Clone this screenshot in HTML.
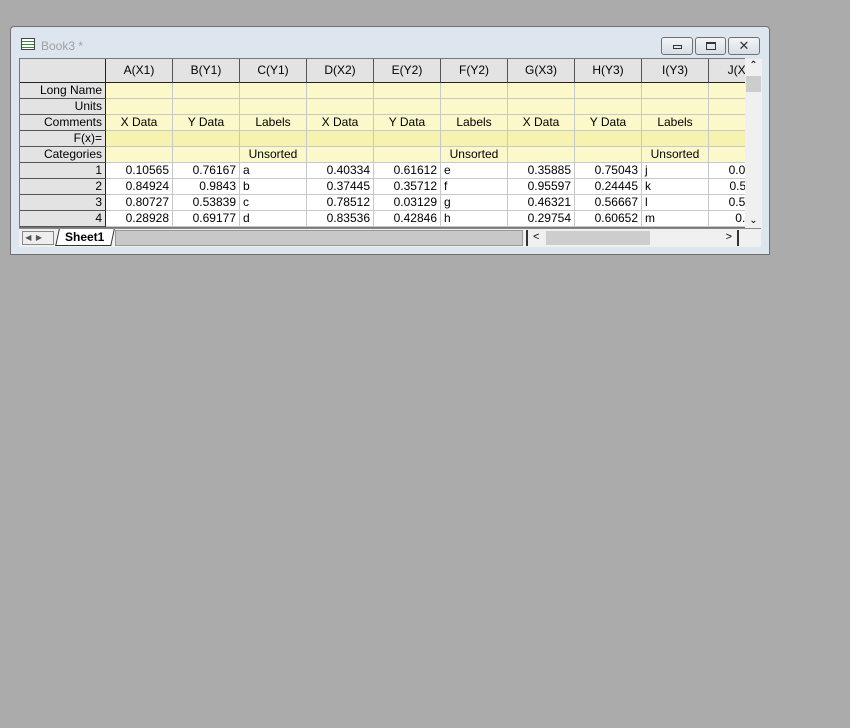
<!DOCTYPE html>
<html><head><style>
*{margin:0;padding:0;box-sizing:border-box}
body{width:850px;height:728px;background:#ababab;position:relative;overflow:hidden;font-family:"Liberation Sans",Arial,sans-serif;font-size:12px;color:#000}
.win{position:absolute;left:10px;top:26px;width:760px;height:229px;background:#dde5ee;border:1px solid #707070;border-radius:4px 4px 0 0}
.title{position:absolute;left:30px;top:12px;color:#a0a0a0;font-size:12px}
.icon{position:absolute;left:10px;top:11px;width:14px;height:12px;border:1px solid #444;background:repeating-linear-gradient(#fff 0 2px,#3a8a3a 2px 3px)}
.btn{position:absolute;top:10px;height:18px;border:1px solid #707070;border-radius:3px;background:linear-gradient(#f2f4f7,#d8dee6)}
.grid{position:absolute;left:8px;top:31px;width:726px;height:170px;overflow:hidden;background:#fff;border:1px solid #777;border-right:none}
table{border-collapse:separate;border-spacing:0;table-layout:fixed;width:756px}
td{height:16px;border-right:1px solid #c8c8c8;border-bottom:1px solid #c8c8c8;white-space:nowrap;overflow:hidden;padding:0 3px;line-height:15px}
td.h{background:#e3e3e3;text-align:right;border-right:1px solid #222;border-bottom:1px solid #555}
tr.top td{height:24px;background:#e3e3e3;text-align:center;border-bottom:1px solid #222;border-right:1px solid #555}
tr.top td:first-child{border-right:1px solid #222}
td.y{background:#fbf9c9;text-align:center}
td.y2{background:#f6f3b0}
td.n{text-align:right}
.vs{position:absolute;left:734px;top:32px;width:17px;height:169px;background:#f0f0f0}
.bot{position:absolute;left:8px;top:201px;width:742px;height:19px;background:#f0f0f0;border-top:1px solid #888}
</style></head><body>
<div class="win">
<div class="icon"></div><div class="title">Book3 *</div>
<div class="btn" style="left:650px;width:32px"><div style="position:absolute;left:11px;top:7px;width:9px;height:4px;border:1px solid #333"></div></div>
<div class="btn" style="left:684px;width:31px"><div style="position:absolute;left:10px;top:4px;width:10px;height:8px;border:1px solid #333;border-top-width:2px"></div></div>
<div class="btn" style="left:717px;width:32px;text-align:center;line-height:15px;color:#333;font-size:13px">✕</div>
<div class="grid">
<table>
<colgroup><col style="width:86px"><col style="width:67px"><col style="width:67px"><col style="width:67px"><col style="width:67px"><col style="width:67px"><col style="width:67px"><col style="width:67px"><col style="width:67px"><col style="width:67px"><col style="width:67px"></colgroup>
<tr class="top"><td></td><td>A(X1)</td><td>B(Y1)</td><td>C(Y1)</td><td>D(X2)</td><td>E(Y2)</td><td>F(Y2)</td><td>G(X3)</td><td>H(Y3)</td><td>I(Y3)</td><td>J(X4)</td></tr>
<tr><td class="h">Long Name</td><td class="y"></td><td class="y"></td><td class="y"></td><td class="y"></td><td class="y"></td><td class="y"></td><td class="y"></td><td class="y"></td><td class="y"></td><td class="y"></td></tr>
<tr><td class="h">Units</td><td class="y"></td><td class="y"></td><td class="y"></td><td class="y"></td><td class="y"></td><td class="y"></td><td class="y"></td><td class="y"></td><td class="y"></td><td class="y"></td></tr>
<tr><td class="h">Comments</td><td class="y">X Data</td><td class="y">Y Data</td><td class="y">Labels</td><td class="y">X Data</td><td class="y">Y Data</td><td class="y">Labels</td><td class="y">X Data</td><td class="y">Y Data</td><td class="y">Labels</td><td class="y"></td></tr>
<tr><td class="h">F(x)=</td><td class="y y2"></td><td class="y y2"></td><td class="y y2"></td><td class="y y2"></td><td class="y y2"></td><td class="y y2"></td><td class="y y2"></td><td class="y y2"></td><td class="y y2"></td><td class="y y2"></td></tr>
<tr><td class="h">Categories</td><td class="y"></td><td class="y"></td><td class="y">Unsorted</td><td class="y"></td><td class="y"></td><td class="y">Unsorted</td><td class="y"></td><td class="y"></td><td class="y">Unsorted</td><td class="y"></td></tr>
<tr><td class="h">1</td><td class="n">0.10565</td><td class="n">0.76167</td><td>a</td><td class="n">0.40334</td><td class="n">0.61612</td><td>e</td><td class="n">0.35885</td><td class="n">0.75043</td><td>j</td><td class="n">0.09912</td></tr>
<tr><td class="h">2</td><td class="n">0.84924</td><td class="n">0.9843</td><td>b</td><td class="n">0.37445</td><td class="n">0.35712</td><td>f</td><td class="n">0.95597</td><td class="n">0.24445</td><td>k</td><td class="n">0.52311</td></tr>
<tr><td class="h">3</td><td class="n">0.80727</td><td class="n">0.53839</td><td>c</td><td class="n">0.78512</td><td class="n">0.03129</td><td>g</td><td class="n">0.46321</td><td class="n">0.56667</td><td>l</td><td class="n">0.51234</td></tr>
<tr><td class="h">4</td><td class="n">0.28928</td><td class="n">0.69177</td><td>d</td><td class="n">0.83536</td><td class="n">0.42846</td><td>h</td><td class="n">0.29754</td><td class="n">0.60652</td><td>m</td><td class="n">0.7123</td></tr>
</table>
</div>
<div class="vs"><div style="text-align:center;font-size:10px;line-height:14px">&#8963;</div><div style="position:absolute;left:1px;top:17px;width:15px;height:16px;background:#cdcdcd"></div><div style="position:absolute;bottom:2px;width:17px;text-align:center;font-size:10px">&#8964;</div></div>
<div class="bot">
<div style="position:absolute;left:3px;top:2px;width:32px;height:14px;border:1px solid #888;background:#eee;font-size:8px;line-height:12px;color:#555">&nbsp;◀&nbsp;&nbsp;▶</div>
<div style="position:absolute;left:38px;top:0;width:56px;height:17px;background:#fff;border-left:1px solid #333;border-right:1px solid #333;border-bottom:1px solid #333;transform:skewX(-12deg)"></div>
<div style="position:absolute;left:46px;top:1px;font-weight:bold;font-size:12px">Sheet1</div>
<div style="position:absolute;left:96px;top:1px;width:408px;height:16px;background:#c8c8c8;border:1px solid #999"></div>
<div style="position:absolute;left:507px;top:1px;width:213px;height:16px;background:#f0f0f0;border-left:2px solid #333;border-right:2px solid #333"><span style="position:absolute;left:5px;top:1px;font-size:11px">&lt;</span><div style="position:absolute;left:18px;top:1px;width:104px;height:14px;background:#cdcdcd"></div><span style="position:absolute;right:5px;top:1px;font-size:11px">&gt;</span></div>
</div>
</div>
</body></html>
